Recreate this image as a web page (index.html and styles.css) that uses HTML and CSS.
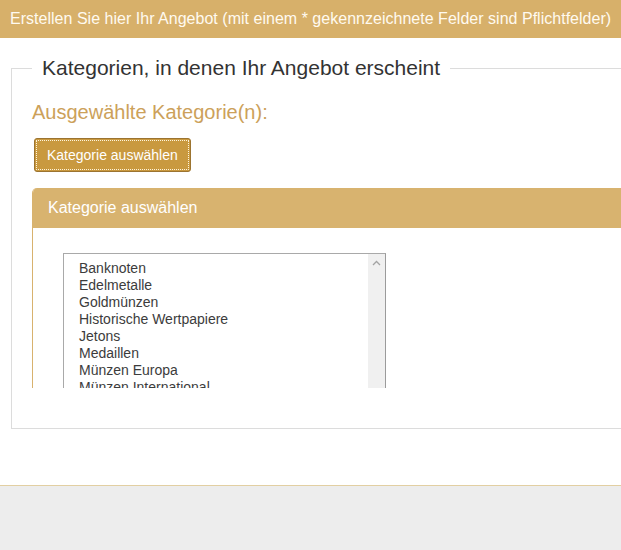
FILE: index.html
```html
<!DOCTYPE html>
<html lang="de">
<head>
  <meta charset="UTF-8" />
  <meta name="viewport" content="width=device-width, initial-scale=1" />
  <title>Angebot erstellen</title>
  <link rel="stylesheet" href="styles.css">
</head>
<body>

<header class="topbar">
  Erstellen Sie hier Ihr Angebot (mit einem * gekennzeichnete Felder sind Pflichtfelder)
</header>

<main class="content">
  <fieldset class="group">
    <legend>Kategorien, in denen Ihr Angebot erscheint</legend>
    <h3 class="selected-title">Ausgewählte Kategorie(n):</h3>
    <button class="btn-gold" type="button">Kategorie auswählen</button>

    <div class="panel">
      <div class="panel-head">Kategorie auswählen</div>
      <div class="panel-body">
        <div class="listbox">
          <ul class="options">
            <li>Banknoten</li>
            <li>Edelmetalle</li>
            <li>Goldmünzen</li>
            <li>Historische Wertpapiere</li>
            <li>Jetons</li>
            <li>Medaillen</li>
            <li>Münzen Europa</li>
            <li>Münzen International</li>
          </ul>
          <div class="scrollbar">
            <svg class="arrow-up" width="9" height="6" viewBox="0 0 9 6">
              <path d="M1 5 L4.5 1.5 L8 5" fill="none" stroke="#a3a3a3" stroke-width="1.3"/>
            </svg>
          </div>
        </div>
      </div>
    </div>
  </fieldset>
</main>

<footer class="foot"></footer>

</body>
</html>
```

FILE: styles.css
```css
html, body {
  margin: 0;
  padding: 0;
}
body {
  font-family: "Liberation Sans", Arial, sans-serif;
  color: #333;
  background: #fff;
  overflow: hidden;
  width: 621px;
  height: 550px;
}
.topbar {
  background-color: #d7b06a;
  color: #fffaf0;
  font-size: 16px;
  height: 38px;
  line-height: 38px;
  padding: 0 10px;
  white-space: nowrap;
  letter-spacing: 0.02px;
}
.content {
  padding: 18px 0 0 11px;
  width: 760px;
  height: 429px;
}
.group {
  margin: 0;
  padding: 20px 20px 40px 20px;
  border: 1px solid #dcdcdc;
  min-width: 0;
}
.group legend {
  font-size: 21px;
  line-height: 24px;
  padding: 0 10px;
  margin-left: 0;
  color: #333;
}
.selected-title {
  margin: 0 0 14px 0;
  font-size: 20px;
  font-weight: normal;
  line-height: 24px;
  color: #cca15a;
}
.btn-gold {
  margin-left: 2px;
  height: 34px;
  padding: 0 12px;
  background-color: #c9993f;
  color: #fff;
  font-family: "Liberation Sans", Arial, sans-serif;
  font-size: 14px;
  border: 1px solid #9c7430;
  border-radius: 3px;
  outline: 1px dotted #fff5dc;
  outline-offset: -3px;
  cursor: pointer;
}
.panel {
  margin-top: 16px;
  border-left: 1px solid #d8b26e;
  border-top-left-radius: 5px;
  overflow: hidden;
  height: 200px;
}
.panel-head {
  background-color: #d8b36f;
  color: #fff;
  font-size: 16px;
  height: 40px;
  line-height: 40px;
  padding-left: 15px;
}
.panel-body {
  padding: 25px 0 0 30px;
  height: 135px;
  overflow: hidden;
}
.listbox {
  display: flex;
  width: 321px;
  height: 170px;
  border: 1px solid #a9a9a9;
  border-right: 1px solid #9b9b9b;
}
.options {
  flex: 1;
  list-style: none;
  margin: 0;
  padding: 6px 0 0 15px;
  font-size: 14px;
  line-height: 17px;
  color: #3c3c3c;
}
.scrollbar {
  width: 17px;
  background: #f0f0f0;
  display: flex;
  justify-content: center;
  padding-top: 6px;
  box-sizing: border-box;
}
.arrow-up {
  display: block;
}
.foot {
  border-top: 1px solid #e2cfa2;
  background: #ededed;
  height: 70px;
}
```
